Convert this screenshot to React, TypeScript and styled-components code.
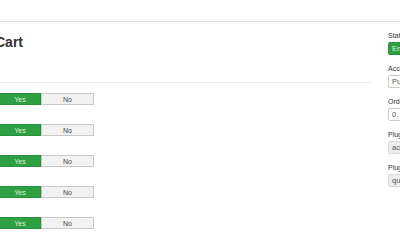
import React from "react";
import styled, { createGlobalStyle } from "styled-components";

const GlobalStyle = createGlobalStyle`
  html, body {
    margin: 0;
    padding: 0;
    background: #ffffff;
    font-family: "Liberation Sans", Arial, sans-serif;
    color: #333333;
    overflow: hidden;
  }
`;

const Header = styled.div`
  height: 21px;
  background: #ffffff;
  border-bottom: 1px solid #e2e2e2;
  box-shadow: 0 1px 2px rgba(0, 0, 0, 0.05);
`;

const Body = styled.div`
  display: flex;
  gap: 17px;
  width: 460px;
`;

const Main = styled.div`
  width: 374px;
  margin-left: -3px;
  padding-top: 12px;
  flex-shrink: 0;
`;

const Title = styled.h1`
  margin: 0 0 32px -2px;
  font-size: 14px;
  line-height: 16px;
  font-weight: bold;
  color: #333333;
`;

const Rule = styled.hr`
  margin: 0;
  border: 0;
  border-top: 1px solid #eaeaea;
`;

const Rows = styled.div`
  display: flex;
  flex-direction: column;
  gap: 19px;
  padding-top: 10px;
  padding-left: 3px;
`;

const Toggle = styled.div`
  display: flex;
  height: 12px;
  margin-left: -1px;
`;

const Choice = styled.div<{ $on?: boolean; $w: number }>`
  width: ${(p) => p.$w}px;
  box-sizing: border-box;
  display: flex;
  align-items: center;
  justify-content: center;
  font-size: 7px;
  line-height: 1;
  background: ${(p) => (p.$on ? "#2f9f43" : "#f2f2f2")};
  color: ${(p) => (p.$on ? "#d8f0d8" : "#444444")};
  border: 1px solid ${(p) => (p.$on ? "#2a8f3b" : "#c9c9c9")};
`;

const Side = styled.div`
  padding-top: 10px;
  display: flex;
  flex-direction: column;
  width: 60px;
  flex-shrink: 0;
`;

const Group = styled.div`
  margin-bottom: 10px;
`;

const Label = styled.div`
  font-size: 7px;
  line-height: 8px;
  height: 8px;
  margin-bottom: 2px;
  color: #333333;
  white-space: nowrap;
`;

const Control = styled.div<{ $kind: "green" | "white" | "grey" }>`
  height: 13px;
  width: 60px;
  box-sizing: border-box;
  border-radius: 2px;
  padding-left: 3px;
  display: flex;
  align-items: center;
  font-size: 7.5px;
  white-space: nowrap;
  overflow: hidden;
  background: ${(p) =>
    p.$kind === "green" ? "#2f9f43" : p.$kind === "grey" ? "#eeeeee" : "#ffffff"};
  color: ${(p) => (p.$kind === "green" ? "#d8f0d8" : "#555555")};
  border: 1px solid
    ${(p) => (p.$kind === "green" ? "#2a8f3b" : p.$kind === "grey" ? "#d6d6d6" : "#cccccc")};
`;

const sideFields: { label: string; value: string; kind: "green" | "white" | "grey" }[] = [
  { label: "Status", value: "Enabled", kind: "green" },
  { label: "Access", value: "Public", kind: "white" },
  { label: "Ordering", value: "0. Cart", kind: "white" },
  { label: "Plugin Folder", value: "actionlog", kind: "grey" },
  { label: "Plugin File", value: "quickicon", kind: "grey" },
];

export default function App() {
  return (
    <>
      <GlobalStyle />
      <Header />
      <Body>
        <Main>
          <Title>Cart</Title>
          <Rule />
          <Rows>
            {[0, 1, 2, 3, 4].map((i) => (
              <Toggle key={i}>
                <Choice $on $w={42}>Yes</Choice>
                <Choice $w={53}>No</Choice>
              </Toggle>
            ))}
          </Rows>
        </Main>
        <Side>
          {sideFields.map((f) => (
            <Group key={f.label}>
              <Label>{f.label}</Label>
              <Control $kind={f.kind}>{f.value}</Control>
            </Group>
          ))}
        </Side>
      </Body>
    </>
  );
}
